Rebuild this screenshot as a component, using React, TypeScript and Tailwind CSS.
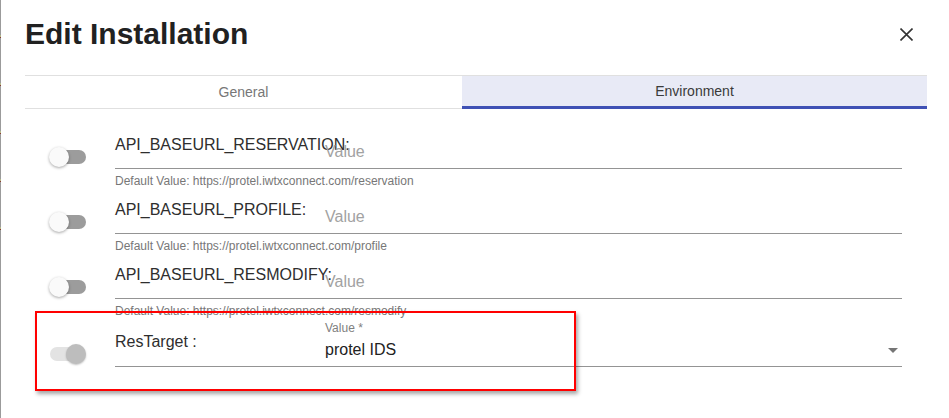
import React from "react";

type Row = {
  name: string;
  defaultValue: string;
};

const rows: Row[] = [
  {
    name: "API_BASEURL_RESERVATION:",
    defaultValue: "https://protel.iwtxconnect.com/reservation",
  },
  {
    name: "API_BASEURL_PROFILE:",
    defaultValue: "https://protel.iwtxconnect.com/profile",
  },
  {
    name: "API_BASEURL_RESMODIFY:",
    defaultValue: "https://protel.iwtxconnect.com/resmodify",
  },
];

function Toggle({ checked, disabled }: { checked?: boolean; disabled?: boolean }) {
  return (
    <div className="relative h-[20px] w-[37px]">
      <div
        className={
          disabled
            ? "absolute left-[1px] top-[3px] h-[14px] w-[35px] rounded-full bg-[#e3e3e3]"
            : "absolute left-[3px] top-[3px] h-[14px] w-[34px] rounded-full bg-[#9c9c9c]"
        }
      />
      <div
        className={
          checked
            ? "absolute left-[17px] top-0 h-[20px] w-[20px] rounded-full bg-[#bdbdbd] shadow-[0_1px_2px_rgba(0,0,0,0.25)]"
            : "absolute left-0 top-0 h-[20px] w-[20px] rounded-full bg-[#fafafa] shadow-[0_1px_3px_rgba(0,0,0,0.35)]"
        }
      />
    </div>
  );
}

function EnvRow({ row }: { row: Row }) {
  return (
    <div className="flex h-[65px]">
      <div className="w-[90px] shrink-0 pl-[24px] pt-[23px]">
        <Toggle />
      </div>
      <div className="flex flex-1 flex-col">
        <div className="flex h-[46px] border-b border-[#949494]">
          <div className="w-[210px] shrink-0 whitespace-nowrap pt-[11px] text-[16px] leading-[20px] text-[#2e2e2e]">
            {row.name}
          </div>
          <div className="flex-1 pt-[18px] text-[16px] leading-[20px] text-[#a2a2a2]">
            Value
          </div>
        </div>
        <div className="mt-[4px] whitespace-nowrap text-[12px] leading-[16px] text-[#777]">
          Default Value: {row.defaultValue}
        </div>
      </div>
    </div>
  );
}

export default function App() {
  return (
    <div
      className="relative flex h-[418px] w-[949px] overflow-hidden bg-white"
      style={{ fontFamily: '"Liberation Sans", Arial, sans-serif' }}
    >
      {/* page edge behind the dialog */}
      <div className="flex w-px shrink-0 flex-col gap-[45px] bg-[#9b9b9b] pt-[35px]">
        {[0, 1, 2, 3, 4].map((i) => (
          <div key={i} className="flex flex-col">
            <div className="h-[2px] w-px bg-[#b5b98a]" />
            <div className="h-px w-px bg-[#8a3b32]" />
          </div>
        ))}
      </div>

      <div className="flex flex-1 flex-col pl-[24px] pr-[22px]">
        <div className="flex items-start justify-between pr-[14px] pt-[19px]">
          <h1 className="text-[30px] font-bold leading-[30px] text-[#212121]">
            Edit Installation
          </h1>
          <svg
            className="mt-[9px]"
            width="13"
            height="13"
            viewBox="0 0 13 13"
            fill="none"
            stroke="#333"
            strokeWidth="1.6"
          >
            <path d="M0.5 0.5L12.5 12.5M12.5 0.5L0.5 12.5" />
          </svg>
        </div>

        <div className="mt-[26px] flex border-t border-[#e0e0e0] text-[14px]">
          <div className="flex h-[33px] w-[437px] items-center justify-center border-b border-[#e0e0e0] text-[#777]">
            General
          </div>
          <div className="flex h-[33px] w-[465px] items-center justify-center border-b-[3px] border-[#3f51b5] bg-[#e8eaf6] text-[#3a3a3a]">
            Environment
          </div>
        </div>

        <div className="mt-[15px] flex flex-col pr-[25px]">
          {rows.map((row) => (
            <EnvRow key={row.name} row={row} />
          ))}

          <div className="mt-[1px] flex h-[65px]">
            <div className="w-[90px] shrink-0 pl-[24px] pt-[24px]">
              <Toggle checked disabled />
            </div>
            <div className="flex h-[47px] flex-1 border-b border-[#949494]">
              <div className="w-[210px] shrink-0 whitespace-nowrap pt-[12px] text-[16px] leading-[20px] text-[#2e2e2e]">
                ResTarget :
              </div>
              <div className="flex flex-1 flex-col">
                <div className="text-[12px] leading-[16px] text-[#808080]">Value *</div>
                <div className="mt-[2px] flex h-[24px] items-center">
                  <span className="flex-1 text-[16px] leading-[20px] text-[#222]">
                    protel IDS
                  </span>
                  <svg
                    className="-mr-[3px]"
                    width="24"
                    height="24"
                    viewBox="0 0 24 24"
                    fill="rgba(0,0,0,0.54)"
                  >
                    <path d="M7 10l5 5 5-5z" />
                  </svg>
                </div>
              </div>
            </div>
          </div>
        </div>
      </div>

      {/* annotation box */}
      <div className="absolute left-[35px] top-[311px] h-[80px] w-[541px] border-2 border-[#f00] shadow-[2px_3px_4px_rgba(0,0,0,0.35)]" />
    </div>
  );
}
